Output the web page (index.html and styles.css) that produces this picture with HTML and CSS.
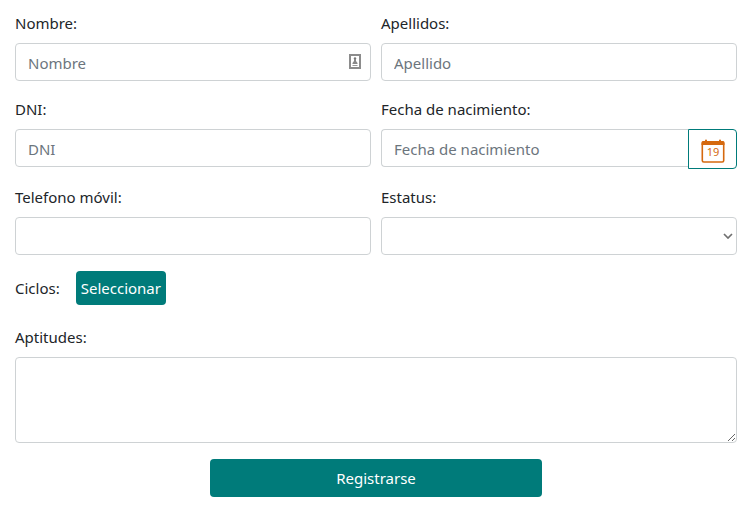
FILE: index.html
```html
<!DOCTYPE html>
<html lang="es">
<head>
<meta charset="utf-8">
<meta name="viewport" content="width=device-width, initial-scale=1">
<title>Registro</title>
<link rel="stylesheet" href="styles.css">
</head>
<body>
<form class="form">
  <div class="row">
    <div class="field">
      <label for="nombre">Nombre:</label>
      <div class="with-icon">
        <input class="control" type="text" id="nombre" placeholder="Nombre">
        <svg class="contact-icon" viewBox="0 0 12 16" width="12" height="16" aria-hidden="true">
          <rect x="1" y="1" width="10" height="13" fill="#fff" stroke="#8c8c8c" stroke-width="2"/>
          <circle cx="6" cy="4.500" r="1.200" fill="#777"/>
          <path d="M5 5h2v2l1.500 2v1h-5V9L5 7z" fill="#888"/>
          <path d="M3.500 11.500h5" stroke="#999" stroke-width="1"/>
        </svg>
      </div>
    </div>
    <div class="field">
      <label for="apellidos">Apellidos:</label>
      <input class="control" type="text" id="apellidos" placeholder="Apellido">
    </div>
  </div>
  <div class="row">
    <div class="field">
      <label for="dni">DNI:</label>
      <input class="control" type="text" id="dni" placeholder="DNI">
    </div>
    <div class="field">
      <label for="fecha">Fecha de nacimiento:</label>
      <div class="group">
        <input class="control" type="text" id="fecha" placeholder="Fecha de nacimiento">
        <button class="date-button" type="button" aria-label="Abrir calendario">
          <svg viewBox="0 0 24 24" width="24" height="24" aria-hidden="true">
            <path d="M2 2h20a1.500 1.500 0 0 1 1.500 1.500V6H.5V3.500A1.500 1.500 0 0 1 2 2z" fill="#d5690f"/>
            <rect x="1.300" y="3" width="21.400" height="20" rx="1.500" fill="none" stroke="#d5690f" stroke-width="1.600"/>
            <path d="M5 1.500v2M19 1.500v2" stroke="#d5690f" stroke-width="2" stroke-linecap="round"/>
            <text class="day" x="12" y="17" text-anchor="middle">19</text>
          </svg>
        </button>
      </div>
    </div>
  </div>
  <div class="row">
    <div class="field">
      <label for="telefono">Telefono móvil:</label>
      <input class="control" type="tel" id="telefono">
    </div>
    <div class="field">
      <label for="estatus">Estatus:</label>
      <div class="with-icon">
        <select class="control select" id="estatus"><option></option></select>
        <svg class="chevron" viewBox="0 0 10 6" width="10" height="6" aria-hidden="true">
          <path d="M1 1l4 4 4-4" fill="none" stroke="#707070" stroke-width="1.700"/>
        </svg>
      </div>
    </div>
  </div>
  <div class="cycles">
    <label for="ciclos">Ciclos:</label>
    <button class="button select-button" type="button" id="ciclos">Seleccionar</button>
  </div>
  <div class="field skills">
    <label for="aptitudes">Aptitudes:</label>
    <textarea class="control textarea" id="aptitudes"></textarea>
  </div>
  <button class="button submit" type="submit">Registrarse</button>
</form>
</body>
</html>
```
FILE: styles.css
```css
* {
  box-sizing: border-box;
}

body {
  margin: 0;
  background: #fff;
  color: #212529;
  font: 15px/24px "Noto Sans", "Open Sans", sans-serif;
}

.form {
  display: flex;
  flex-direction: column;
  gap: 16px;
  padding: 11px 3px 9px 15px;
}

.row {
  display: grid;
  grid-template-columns: 1fr 1fr;
  gap: 10px;
}

.field {
  display: flex;
  flex-direction: column;
  gap: 8px;
  min-width: 0;
}

.control {
  display: block;
  width: 100%;
  height: 38px;
  margin: 0;
  padding: 7px 12px 5px;
  border: 1px solid #ced2d4;
  border-radius: 4px;
  background: #fff;
  color: #495057;
  font: inherit;
}

.control::placeholder {
  color: #6c757d;
  opacity: 1;
}

.with-icon {
  position: relative;
}

.contact-icon {
  position: absolute;
  top: 11px;
  right: 10px;
}

.group {
  display: flex;
  align-items: flex-start;
}

.group .control {
  flex: 1;
  min-width: 0;
  border-right: 0;
  border-radius: 4px 0 0 4px;
}

.date-button {
  display: flex;
  align-items: center;
  justify-content: center;
  width: 49px;
  height: 40px;
  padding: 4px 0 0;
  border: 1px solid #007b7a;
  border-radius: 0 4px 4px 0;
  background: #fff;
}

.day {
  fill: #d5690f;
  font: 11px "Noto Sans", sans-serif;
}

.select {
  appearance: none;
}

.chevron {
  position: absolute;
  top: 16px;
  right: 4px;
  pointer-events: none;
}

.cycles {
  display: flex;
  align-items: center;
  gap: 16px;
}

.button {
  border: 0;
  border-radius: 4px;
  background: #007b7a;
  color: #fff;
  font: inherit;
}

.select-button {
  height: 34px;
  padding: 5px;
}

.skills {
  padding-top: 4px;
}

.textarea {
  height: 86px;
  resize: vertical;
}

.submit {
  align-self: center;
  width: 46%;
  height: 38px;
}
```
